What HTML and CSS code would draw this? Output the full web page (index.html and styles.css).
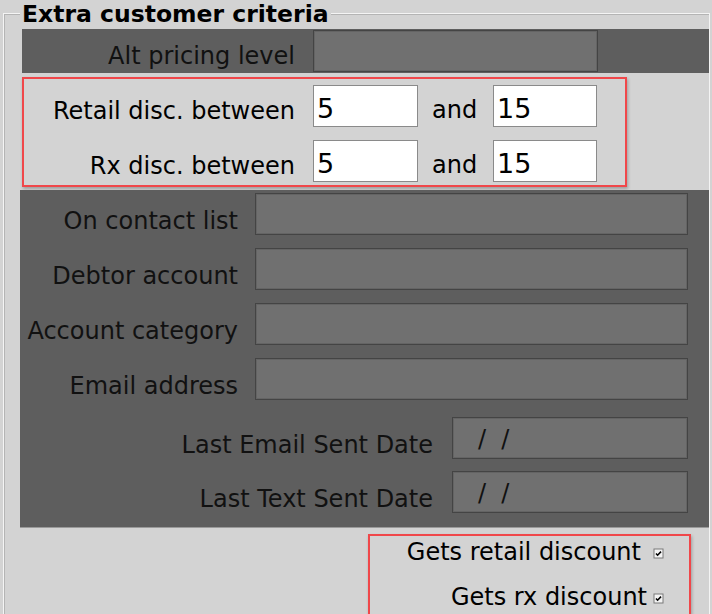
FILE: index.html
```html
<!DOCTYPE html>
<html>
<head>
<meta charset="utf-8">
<link rel="stylesheet" href="styles.css">
</head>
<body>
<div class="group">
  <div class="legend">Extra customer criteria</div>

  <div class="panel panel-top">
    <div class="row">
      <label class="lbl lbl-top">Alt pricing level</label>
      <input class="field dark w-alt" type="text" readonly>
    </div>
  </div>

  <div class="highlight disc">
    <div class="row">
      <label class="lbl lbl-disc">Retail disc. between</label>
      <input class="field white w-from" type="text" value="5" readonly>
      <span class="and">and</span>
      <input class="field white w-to" type="text" value="15" readonly>
    </div>
    <div class="row">
      <label class="lbl lbl-disc">Rx disc. between</label>
      <input class="field white w-from" type="text" value="5" readonly>
      <span class="and">and</span>
      <input class="field white w-to" type="text" value="15" readonly>
    </div>
  </div>

  <div class="panel panel-main">
    <div class="row">
      <label class="lbl lbl-main">On contact list</label>
      <input class="field dark w-main" type="text" readonly>
    </div>
    <div class="row">
      <label class="lbl lbl-main">Debtor account</label>
      <input class="field dark w-main" type="text" readonly>
    </div>
    <div class="row">
      <label class="lbl lbl-main">Account category</label>
      <input class="field dark w-main" type="text" readonly>
    </div>
    <div class="row">
      <label class="lbl lbl-main">Email address</label>
      <input class="field dark w-main" type="text" readonly>
    </div>
    <div class="dates">
      <div class="row">
        <label class="lbl lbl-date">Last Email Sent Date</label>
        <input class="field dark date w-date" type="text" value="   /  /" readonly>
      </div>
      <div class="row">
        <label class="lbl lbl-date">Last Text Sent Date</label>
        <input class="field dark date w-date" type="text" value="   /  /" readonly>
      </div>
    </div>
  </div>

  <div class="highlight checks">
    <div class="check-row">
      <span class="check-lbl gap-wide">Gets retail discount</span>
      <svg class="cb" width="11" height="11" viewBox="0 0 11 11"><rect x="0.5" y="0.5" width="10" height="10" fill="#7a7a7a"/><rect x="1.5" y="1.5" width="8" height="8" fill="#f4f4f4"/><path d="M3 5.5 L4.6 7.2 L8 3.6" fill="none" stroke="#000" stroke-width="1.6"/></svg>
    </div>
    <div class="check-row">
      <span class="check-lbl gap-narrow">Gets rx discount</span>
      <svg class="cb" width="11" height="11" viewBox="0 0 11 11"><rect x="0.5" y="0.5" width="10" height="10" fill="#7a7a7a"/><rect x="1.5" y="1.5" width="8" height="8" fill="#f4f4f4"/><path d="M3 5.5 L4.6 7.2 L8 3.6" fill="none" stroke="#000" stroke-width="1.6"/></svg>
    </div>
  </div>
</div>
</body>
</html>
```

FILE: styles.css
```css
* { box-sizing: border-box; }

html, body {
  margin: 0;
  padding: 0;
  background: #d3d3d3;
  height: 614px;
  overflow: hidden;
}

body {
  font-family: "DejaVu Sans", Verdana, sans-serif;
  font-size: 24px;
  color: #111;
}

.group {
  margin: 13px 2px 0 3px;
  border-left: 1px solid #f4f4f4;
  border-top: 1px solid #f4f4f4;
  border-right: 1px solid #f4f4f4;
  box-shadow: inset 1px 1px 0 #b4b4b4;
  padding: 0 0 0 16px;
  height: 620px;
}

.legend {
  display: block;
  width: fit-content;
  margin: -14px 0 0 0;
  padding: 0 2px;
  background: #d3d3d3;
  font-weight: bold;
  font-size: 23.5px;
  line-height: 28px;
  color: #000;
}

.panel {
  background: #5e5e5e;
}

.panel-top {
  margin: 1px 0 0 2px;
  padding: 1px 0;
  height: 44px;
}

.row {
  display: flex;
  align-items: flex-end;
}

.lbl {
  text-align: right;
  line-height: 28px;
  white-space: nowrap;
  flex: none;
}

.lbl-top { width: 273px; margin-right: 18px; margin-bottom: 2px; }
.lbl-disc { width: 271px; margin-right: 18px; margin-bottom: 2px; }
.lbl-main { width: 218px; margin-right: 17px; }
.lbl-date { width: 413px; margin-right: 19px; }

.field {
  flex: none;
  height: 42px;
  font-family: "DejaVu Sans", Verdana, sans-serif;
  margin: 0;
  outline: none;
  border-radius: 0;
}

.dark {
  background: #707070;
  border: 1px solid #444;
  box-shadow: inset 0 0 0 1px #646464;
  font-size: 24px;
  color: #111;
  padding: 0 2px;
}

.white {
  background: #fff;
  border: 1px solid #8a8a8a;
  font-size: 27px;
  color: #000;
  padding: 4px 3px 0;
}

.date { padding-top: 2px; }

.w-alt { width: 285px; }
.w-from { width: 105px; }
.w-to { width: 104px; }
.w-main { width: 433px; }
.w-date { width: 236px; }

.and {
  width: 44px;
  margin: 0 17px 3px 14px;
  line-height: 28px;
  color: #000;
}

.highlight {
  border: 2px solid #f0474a;
  box-shadow: 1px 2px 3px rgba(0, 0, 0, 0.25);
}

.disc {
  width: 605px;
  margin: 4px 0 0 2px;
  padding: 6px 0 3px 0;
  display: flex;
  flex-direction: column;
  gap: 13px;
  color: #000;
}

.panel-main {
  margin-top: 3px;
  padding: 3px 0 14px 0;
  display: flex;
  flex-direction: column;
  gap: 13px;
  border-bottom: 1px solid #9a9a9a;
}

.dates {
  margin-top: 4px;
  display: flex;
  flex-direction: column;
  gap: 12px;
}

.checks {
  width: 323px;
  margin: 6px 18px 0 auto;
  padding: 2px 25px 20px 0;
  display: flex;
  flex-direction: column;
  gap: 17px;
}

.check-row {
  display: flex;
  justify-content: flex-end;
  align-items: center;
  height: 28px;
  color: #000;
}

.check-lbl { line-height: 28px; white-space: nowrap; }
.gap-wide { margin-right: 12px; }
.gap-narrow { margin-right: 6px; }

.cb { flex: none; display: block; margin-top: 2px; }
```
